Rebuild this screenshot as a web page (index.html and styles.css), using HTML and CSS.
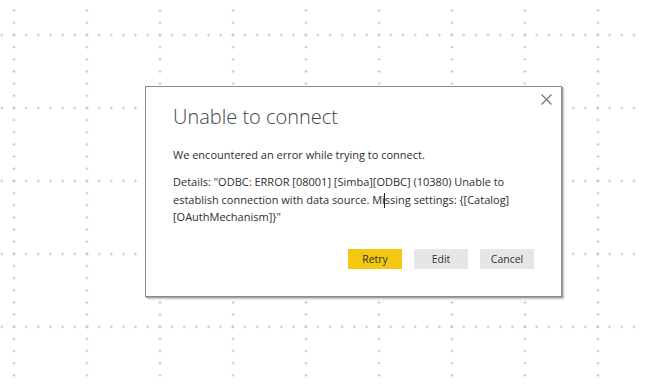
FILE: index.html
```html
<!DOCTYPE html>
<html>
<head>
<meta charset="utf-8">
<link rel="stylesheet" href="styles.css">
</head>
<body>
<div class="canvas">
  <div class="dialog">
    <button class="close" aria-label="Close">
      <svg width="11" height="11" viewBox="0 0 11 11"><path d="M0.5 0.5 L10.5 10.5 M10.5 0.5 L0.5 10.5" stroke="#707070" stroke-width="1.1" fill="none"/></svg>
    </button>
    <h1 class="title">Unable to connect</h1>
    <p class="msg">We encountered an error while trying to connect.</p>
    <p class="details">Details: "ODBC: ERROR [08001] [Simba][ODBC] (10380) Unable to<br>establish connection with data source. Mi<span class="caret"></span>ssing settings: {[Catalog]<br>[OAuthMechanism]}"</p>
    <div class="actions">
      <button class="btn primary">Retry</button>
      <button class="btn">Edit</button>
      <button class="btn">Cancel</button>
    </div>
  </div>
</div>
</body>
</html>
```
FILE: styles.css
```css
html, body {
  margin: 0;
  padding: 0;
  background: #ffffff;
}
body {
  font-family: "Open Sans", "Liberation Sans", sans-serif;
  width: 657px;
  height: 391px;
  overflow: hidden;
}
.canvas {
  width: 641px;
  height: 382px;
  padding: 86px 0 0 145px;
  box-sizing: border-box;
  background-image:
    radial-gradient(circle, #c4c4c4 0.9px, rgba(255,255,255,0) 1.4px),
    radial-gradient(circle, #c4c4c4 0.9px, rgba(255,255,255,0) 1.4px);
  background-size: 12.1667px 73px, 73px 12.1667px;
  background-position: 7.92px -1.5px, -22.5px 28.92px;
}
.dialog {
  position: relative;
  width: 417px;
  height: 211px;
  box-sizing: border-box;
  background: #ffffff;
  border: 1px solid #8c8c8c;
  box-shadow: 1px 1px 0 #a0a0a0, 2px 2px 2px rgba(0,0,0,0.25);
  padding: 17px 27px 0 27px;
  color: #2e2e2e;
}
.close {
  position: absolute;
  top: 7px;
  right: 9px;
  width: 11px;
  height: 11px;
  padding: 0;
  border: 0;
  background: transparent;
  display: flex;
}
.title {
  margin: 0;
  font-size: 20px;
  font-weight: 300;
  line-height: 26px;
  color: #444444;
}
.msg {
  margin: 16px 0 0 0;
  font-size: 11px;
  line-height: 17px;
}
.details {
  margin: 10px 0 0 0;
  font-size: 11px;
  line-height: 17.5px;
}
.caret {
  display: inline-block;
  width: 1px;
  height: 15px;
  background: #222;
  vertical-align: -4px;
  margin: 0 -0.5px;
}
.actions {
  display: flex;
  justify-content: flex-end;
  gap: 12px;
  margin-top: 23px;
}
.btn {
  width: 54px;
  height: 20px;
  border: 0;
  padding: 0;
  background: #e6e6e6;
  color: #333333;
  font-family: "Open Sans", "Liberation Sans", sans-serif;
  font-size: 10.5px;
  line-height: 20px;
}
.btn.primary {
  background: #f2c811;
}
```
